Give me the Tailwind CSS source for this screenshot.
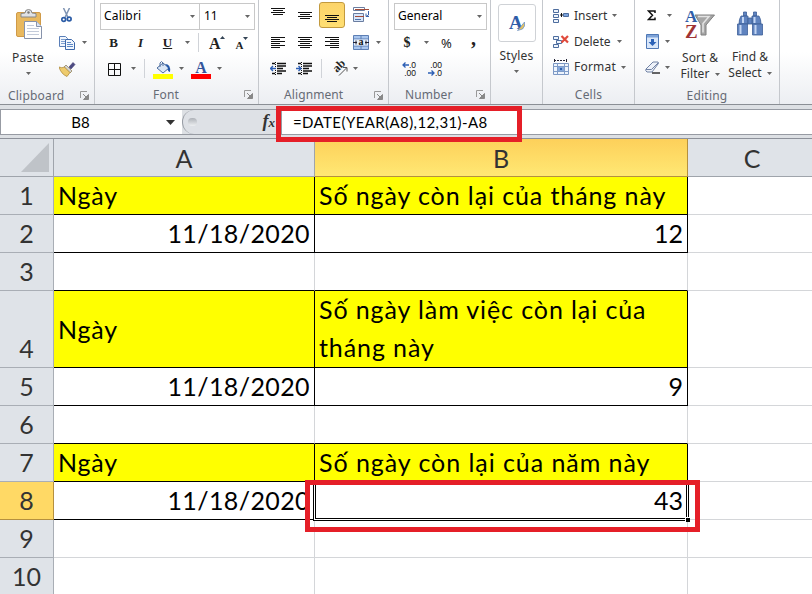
<!DOCTYPE html>
<html lang="vi">
<head>
    <meta charset="UTF-8">
    <meta name="viewport" content="width=device-width, initial-scale=1.0">
    <title>Excel</title>
    <script src="https://cdn.jsdelivr.net/npm/@tailwindcss/browser@4"></script>
</head>
<body class="w-[812px] h-[594px] overflow-hidden bg-white relative font-['Noto_Sans',sans-serif] text-[12px] text-[#333]">

    <!-- Shared icons -->
    <svg class="hidden">
        <symbol id="arrow" viewBox="0 0 5 3"><path d="M0 0h5L2.5 3z" fill="#666"/></symbol>
        <symbol id="launcher" viewBox="0 0 9 9"><path d="M.5 7V.5H7" fill="none" stroke="#999"/><path d="M3 3l4 4M8.500 3.500v5h-5z" fill="#888" stroke="#888"/></symbol>
    </svg>

    <!-- Ribbon -->
    <div class="flex h-[105px] border-b border-[#8b8f95] bg-linear-to-b from-white from-50% to-[#eceef2]">

        <!-- Clipboard -->
        <div class="w-[95px] border-r border-[#c5c8cd] flex flex-col shrink-0">
            <div class="flex h-[84px]">
                <div class="w-[56px] pt-[9px] flex flex-col items-center">
                    <svg class="w-[27px] h-[31px] ml-[2px]" viewBox="0 0 27 31">
                        <rect x=".5" y="3.500" width="24" height="24" rx="1.500" fill="#e9b95f" stroke="#d09a48"/>
                        <path d="M5 8V4.500L9 4q0-3.500 3.500-3.500T16 4l4 .5V8z" fill="#e0e2e5" stroke="#888"/>
                        <circle cx="12.500" cy="3.500" r="1.200" fill="#777"/>
                        <path d="M8.500 12.500h12l5 5v12h-17z" fill="#fff" stroke="#8793ab"/>
                        <path d="M20.500 12.500v5h5" fill="#dbe4f3" stroke="#8793ab"/>
                        <path d="M11 16.500h7M11 19.500h12M11 22.500h12M11 25.500h12" stroke="#c3cbda"/>
                    </svg>
                    <span class="leading-[16px] mt-[10px] tracking-[.2px]">Paste</span>
                    <svg class="w-[5px] h-[3px] mt-[6px]"><use href="#arrow"/></svg>
                </div>
                <div class="pt-[2px]">
                    <div class="h-[27px] flex items-center pl-[5px]">
                        <svg class="w-[11px] h-[15px]" viewBox="0 0 11 15"><path d="M2.500 0l4.500 9.500M8.500 0L4 9.500" stroke="#7e93b2" stroke-width="1.500"/><circle cx="2.700" cy="11.500" r="1.900" fill="none" stroke="#2c5ca6" stroke-width="1.700"/><circle cx="8.200" cy="11" r="1.900" fill="none" stroke="#2c5ca6" stroke-width="1.700"/></svg>
                    </div>
                    <div class="h-[27px] flex items-center pl-[3px]">
                        <svg class="w-[16px] h-[14px]" viewBox="0 0 16 14"><path d="M.5.5h6l2 2v8h-8z" fill="#f1f6fd" stroke="#5a7fb8"/><path d="M2 3.500h4M2 5.500h4M2 7.500h4" stroke="#7d9fd0"/><path d="M6.500 3.500h6l3 3v7h-9z" fill="#f1f6fd" stroke="#3d68aa"/><path d="M8 6.500h4M8 8.500h6M8 10.500h6" stroke="#5c88c6"/></svg>
                        <svg class="w-[5px] h-[3px] ml-[7px]"><use href="#arrow"/></svg>
                    </div>
                    <div class="h-[27px] flex items-center pl-[3px]">
                        <svg class="w-[17px] h-[15px]" viewBox="0 0 17 15"><path d="M10 5l4-4.500 2 2L12 7z" fill="#4c4a82" stroke="#3c3a70" stroke-width=".6"/><path d="M7 3l6 6-2 2-6-6z" fill="#d4d4d4" stroke="#8a7a50" stroke-width=".7"/><path d="M0 5q3 1.500 5.500 0L11 10.500 8 14.500Q2 12 0 5z" fill="#eecb6d" stroke="#a7812c" stroke-width=".7"/></svg>
                    </div>
                </div>
            </div>
            <div class="flex items-center h-[20px] pt-[3px] pl-[8px] text-[#666b75]">
                <span class="w-[72px] tracking-[.2px]">Clipboard</span>
                <svg class="w-[9px] h-[9px]"><use href="#launcher"/></svg>
            </div>
        </div>

        <!-- Font -->
        <div class="w-[164px] border-r border-[#c5c8cd] flex flex-col shrink-0 pt-[2px]">
            <div class="h-[28px] flex pl-[5px] pt-px">
                <div class="w-[100px] border border-[#c8c8c8] bg-white flex items-center justify-between pl-[3px] pr-[4px] text-black">
                    <span class="-mt-[1px] tracking-[.2px]">Calibri</span><svg class="w-[5px] h-[3px]"><use href="#arrow"/></svg>
                </div>
                <div class="w-[55px] border border-l-0 border-[#c8c8c8] bg-white flex items-center justify-between pl-[4px] pr-[4px] text-black">
                    <span class="-mt-[1px]">11</span><svg class="w-[5px] h-[3px]"><use href="#arrow"/></svg>
                </div>
            </div>
            <div class="h-[26px] flex items-center font-['Liberation_Serif',serif] font-bold text-[13px] text-[#222]">
                <span class="w-[27px] ml-[5px] text-center">B</span>
                <span class="w-[27px] text-center italic">I</span>
                <span class="w-[27px] text-center underline">U</span>
                <svg class="w-[5px] h-[3px] ml-[4px]"><use href="#arrow"/></svg>
                <span class="w-px h-[19px] bg-[#d0d3d8] ml-[8px]"></span>
                <span class="ml-[10px] text-[16px] leading-[17px] mt-[2px]">A</span>
                <svg class="w-[5px] h-[3px] -ml-[1px] mb-[9px]" viewBox="0 0 5 3"><path d="M0 3h5L2.500 0z" fill="#345"/></svg>
                <span class="ml-[11px] text-[11px] mt-[5px]">A</span>
                <svg class="w-[5px] h-[3px] -ml-[1px] mb-[8px]" viewBox="0 0 5 3"><path d="M0 0h5L2.500 3z" fill="#345"/></svg>
            </div>
            <div class="h-[27px] flex items-center">
                <svg class="w-[13px] h-[13px] ml-[13px] mt-[2px]" viewBox="0 0 13 13"><path d="M.5.5h12v12H.5zM6.500.5v12M.5 6.500h12" fill="none" stroke="#111"/></svg>
                <svg class="w-[5px] h-[3px] ml-[10px]"><use href="#arrow"/></svg>
                <span class="w-px h-[19px] bg-[#d0d3d8] ml-[8px]"></span>
                <svg class="w-[20px] h-[18px] ml-[8px] mt-[2px]" viewBox="0 0 20 18"><path d="M4 7l6-5 6 5-6 5z" fill="#dbe7f6" stroke="#4e6e9f"/><path d="M7 6V2q1.500-3 3 0v3" fill="none" stroke="#4e6e9f"/><path d="M12 3q6 0 5 8-3-1-2-4z" fill="#2458a8"/><path d="M0 13h20v5H0z" fill="#ff0"/></svg>
                <svg class="w-[5px] h-[3px] ml-[6px]"><use href="#arrow"/></svg>
                <div class="ml-[7px] w-[20px] mt-[2px] h-[18px] flex flex-col items-center border-b-[5px] border-[#f00] font-['Liberation_Serif',serif] font-bold text-[16px] leading-[13px] text-[#34549b]">A</div>
                <svg class="w-[5px] h-[3px] ml-[6px]"><use href="#arrow"/></svg>
            </div>
            <div class="flex items-center h-[21px] pt-[3px] mt-px pl-[58px] text-[#666b75]">
                <span class="w-[91px] tracking-[.2px]">Font</span>
                <svg class="w-[9px] h-[9px]"><use href="#launcher"/></svg>
            </div>
        </div>

        <!-- Alignment -->
        <div class="w-[130px] border-r border-[#c5c8cd] flex flex-col shrink-0 pt-[2px]">
            <div class="h-[27px] flex items-center">
                <svg class="w-[14px] h-[7px] ml-[12px] mb-[7px]" viewBox="0 0 14 7"><path d="M0 .5h14M2 2.500h10M0 4.500h14M2 6.500h10" stroke="#111"/></svg>
                <svg class="w-[14px] h-[7px] ml-[13px]" viewBox="0 0 14 7"><path d="M0 .5h14M2 2.500h10M0 4.500h14M2 6.500h10" stroke="#111"/></svg>
                <div class="w-[26px] h-[26px] ml-[7px] rounded-[3px] border border-[#c29a3e] bg-linear-to-b from-[#fcd46a] to-[#ffdf72] flex justify-center pt-[12px]">
                    <svg class="w-[14px] h-[7px]" viewBox="0 0 14 7"><path d="M0 .5h14M2 2.500h10M0 4.500h14M2 6.500h10" stroke="#111"/></svg>
                </div>
                <svg class="w-[17px] h-[16px] ml-[8px]" viewBox="0 0 17 16"><path d="M.5.500h11v3H.5z" fill="#fff" stroke="#6a7da0"/><path d="M2 2.500h14" stroke="#a34b39"/><path d="M.5 6.500h10v8H.5z" fill="#d7e6fa" stroke="#6a7da0"/><path d="M2 9.500h9" stroke="#a34b39"/><path d="M2 12.500h6" stroke="#4e70a8"/><path d="M15.500 4v4L13 9.500M13 6.500v3h3" fill="none" stroke="#3a64ac"/></svg>
            </div>
            <div class="h-[27px] flex items-center">
                <svg class="w-[14px] h-[11px] ml-[12px]" viewBox="0 0 14 11"><path d="M0 .5h14M0 2.500h9M0 4.500h14M0 6.500h9M0 8.500h14M0 10.500h9" stroke="#111"/></svg>
                <svg class="w-[14px] h-[11px] ml-[13px]" viewBox="0 0 14 11"><path d="M0 .5h14M2 2.500h10M0 4.500h14M2 6.500h10M0 8.500h14M2 10.500h10" stroke="#111"/></svg>
                <svg class="w-[14px] h-[11px] ml-[13px]" viewBox="0 0 14 11"><path d="M0 .5h14M5 2.500h9M0 4.500h14M5 6.500h9M0 8.500h14M5 10.500h9" stroke="#111"/></svg>
                <svg class="w-[16px] h-[15px] ml-[14px]" viewBox="0 0 16 15"><path d="M.5.500h15v14H.5z" fill="#a9c6ee" stroke="#5d7fb4"/><path d="M8 0v15M0 4h16M0 11h16" stroke="#5d7fb4"/><path d="M1 4.500h14v6H1z" fill="#e8f0fb"/><path d="M0 7.500h4M12 7.500h4M3 5.500v4M13 5.500v4" stroke="#223"/><text x="8" y="10" text-anchor="middle" font-family="Liberation Serif" font-weight="bold" font-size="10" fill="#111">a</text></svg>
                <svg class="w-[5px] h-[3px] ml-[7px]"><use href="#arrow"/></svg>
            </div>
            <div class="h-[27px] flex items-center">
                <svg class="w-[16px] h-[13px] ml-[11px]" viewBox="0 0 16 13"><path d="M2 1.500h3M7 1.500h9M7 4h9M7 6.500h6M7 9h9M2 11.500h3M7 11.500h5" stroke="#111" stroke-width="1.300"/><path d="M5.500 0v13" stroke="#111" stroke-dasharray="1 1"/><path d="M6 6.500H1M3 4L.5 6.500 3 9" fill="none" stroke="#2d5fb5" stroke-width="1.400"/></svg>
                <svg class="w-[16px] h-[13px] ml-[10px]" viewBox="0 0 16 13"><path d="M2 1.500h3M7 1.500h9M7 4h9M7 6.500h6M7 9h9M2 11.500h3M7 11.500h5" stroke="#111" stroke-width="1.300"/><path d="M5.500 0v13" stroke="#111" stroke-dasharray="1 1"/><path d="M0 6.500h5M2.500 4L5 6.500 2.500 9" fill="none" stroke="#2d5fb5" stroke-width="1.400"/></svg>
                <span class="w-px h-[19px] bg-[#d0d3d8] ml-[9px]"></span>
                <svg class="w-[17px] h-[16px] ml-[10px] overflow-visible" viewBox="0 0 17 16"><text transform="translate(5 12) rotate(-45)" font-family="Liberation Serif" font-weight="bold" font-size="12" fill="#222">ab</text><path d="M7 14.500L14.500 7M11 6.500h4v4" fill="none" stroke="#555"/></svg>
                <svg class="w-[5px] h-[3px] ml-[4px]"><use href="#arrow"/></svg>
            </div>
            <div class="flex items-center h-[21px] pt-[3px] mt-px pl-[25px] text-[#666b75]">
                <span class="w-[90px] tracking-[.1px]">Alignment</span>
                <svg class="w-[9px] h-[9px]"><use href="#launcher"/></svg>
            </div>
        </div>

        <!-- Number -->
        <div class="w-[102px] border-r border-[#c5c8cd] flex flex-col shrink-0 pt-[2px]">
            <div class="h-[28px] flex pl-[5px] pt-px">
                <div class="w-[93px] border border-[#c8c8c8] bg-white flex items-center justify-between pl-[3px] pr-[4px] text-black">
                    <span class="-mt-[1px]">General</span><svg class="w-[5px] h-[3px]"><use href="#arrow"/></svg>
                </div>
            </div>
            <div class="h-[26px] flex items-center text-[#222]">
                <span class="w-[14px] ml-[11px] text-center font-['Liberation_Serif',serif] font-bold text-[14px]">$</span>
                <svg class="w-[5px] h-[3px] ml-[10px]"><use href="#arrow"/></svg>
                <span class="ml-[12px] w-[12px] text-[13px] mt-[2px]">%</span>
                <span class="ml-[18px] font-['Liberation_Serif',serif] font-bold text-[20px] -mt-[9px]">,</span>
            </div>
            <div class="h-[27px] flex items-center gap-[10px] pl-[11px] font-['Liberation_Sans',sans-serif] text-[8.5px] leading-[8px] text-[#111]">
                <div class="w-[16px] flex flex-col items-end">
                    <span class="flex items-center"><svg class="w-[7px] h-[6px]" viewBox="0 0 7 6"><path d="M7 3H1M3.500.5L1 3l2.500 2.500" fill="none" stroke="#2d5fb5" stroke-width="1.300"/></svg>.0</span>
                    <span>.00</span>
                </div>
                <div class="w-[16px] flex flex-col items-end">
                    <span>.00</span>
                    <span class="flex items-center"><svg class="w-[7px] h-[6px]" viewBox="0 0 7 6"><path d="M0 3h6M3.500.5L6 3 3.500 5.500" fill="none" stroke="#2d5fb5" stroke-width="1.300"/></svg>.0</span>
                </div>
            </div>
            <div class="flex items-center h-[21px] pt-[3px] mt-px pl-[16px] text-[#666b75]">
                <span class="w-[71px] tracking-[.1px]">Number</span>
                <svg class="w-[9px] h-[9px]"><use href="#launcher"/></svg>
            </div>
        </div>

        <!-- Styles -->
        <div class="w-[52px] border-r border-[#c5c8cd] flex flex-col items-center shrink-0 pt-[4px]">
            <div class="w-[38px] h-[38px] border border-[#cfd2d6] rounded-[3px] bg-white flex items-center justify-center">
                <svg class="w-[17px] h-[18px] overflow-visible" viewBox="0 0 17 18"><text x="1" y="15" font-family="Liberation Serif" font-weight="bold" font-size="19" fill="#2f5da8">A</text><path d="M16.500 8l-4 5-3 3.500 5-1.500 2-3z" fill="#e7c35e" stroke="#6e95cc" stroke-width=".8"/></svg>
            </div>
            <span class="leading-[16px] mt-[6px] tracking-[.2px]">Styles</span>
            <svg class="w-[5px] h-[3px] mt-[6px]"><use href="#arrow"/></svg>
        </div>

        <!-- Cells -->
        <div class="w-[92px] border-r border-[#c5c8cd] flex flex-col shrink-0 pt-[3px]">
            <div class="h-[26px] flex items-center pl-[10px]">
                <svg class="w-[16px] h-[14px]" viewBox="0 0 16 14"><path d="M.5.500h5v3h-5zM.5 5.500h5v3h-5zM.5 10.500h5v3h-5z" fill="#eef4fc" stroke="#4d6d9e"/><path d="M10.500 4.500h5v3h-5z" fill="#7ba3dd" stroke="#4d6d9e"/><path d="M7 6h3M8.500 4v4" stroke="#111"/></svg>
                <span class="ml-[5px]">Insert</span><svg class="w-[5px] h-[3px] ml-[5px]"><use href="#arrow"/></svg>
            </div>
            <div class="h-[26px] flex items-center pl-[10px]">
                <svg class="w-[16px] h-[14px]" viewBox="0 0 16 14"><path d="M.5 1.500h5v3h-5zM3.500 5.500h5v3h-5zM.5 9.500h5v3h-5z" fill="#eef4fc" stroke="#4d6d9e"/><path d="M8.500 1l6.500 6.500M15 1L8.500 7.500" stroke="#e04a3c" stroke-width="2.200"/></svg>
                <span class="ml-[5px]">Delete</span><svg class="w-[5px] h-[3px] ml-[6px]"><use href="#arrow"/></svg>
            </div>
            <div class="h-[26px] flex items-center pl-[10px]">
                <svg class="w-[16px] h-[16px]" viewBox="0 0 16 16"><path d="M1 1.500h13" stroke="#223" stroke-dasharray="2 1"/><path d="M1.500 0v3M13.500 0v3" stroke="#223"/><path d="M.5 4.500h15v11H.5z" fill="#eef4fc" stroke="#7d98c4"/><path d="M4.500 4v12M11.500 4v12M0 7.500h16M0 12.500h16" stroke="#7f9cc8"/><path d="M5 8h6v4H5z" fill="#86a8dc"/><path d="M7 9h2v2H7z" fill="#2f62ad"/></svg>
                <span class="ml-[5px] tracking-[.2px]">Format</span><svg class="w-[5px] h-[3px] ml-[5px]"><use href="#arrow"/></svg>
            </div>
            <div class="flex items-center justify-center h-[21px] pt-[3px] mt-[3px] text-[#666b75] tracking-[.2px]">Cells</div>
        </div>

        <!-- Editing -->
        <div class="w-[145px] border-r border-[#c5c8cd] flex flex-col shrink-0">
            <div class="flex h-[84px]">
                <div class="pt-[2px] w-[43px]">
                    <div class="h-[26px] flex items-center pl-[12px]">
                        <svg class="w-[9px] h-[11px]" viewBox="0 0 9 11"><path d="M8 3V1H1.500L5.500 5.300 1.500 9.500H8V7.500" fill="none" stroke="#111" stroke-width="1.500"/></svg>
                        <svg class="w-[5px] h-[3px] ml-[11px]"><use href="#arrow"/></svg>
                    </div>
                    <div class="h-[26px] flex items-center pl-[11px]">
                        <svg class="w-[13px] h-[15px]" viewBox="0 0 13 15"><path d="M.5.500h12v14H.5z" fill="#d9e7fa" stroke="#4f78b6"/><path d="M1 1h11v2.500H1z" fill="#7ea3d8"/><path d="M5 5h3v3h2.500l-4 4-4-4H5z" fill="#2b62b8"/></svg>
                        <svg class="w-[5px] h-[3px] ml-[6px]"><use href="#arrow"/></svg>
                    </div>
                    <div class="h-[26px] flex items-center pl-[10px]">
                        <svg class="w-[15px] h-[13px]" viewBox="0 0 15 13"><path d="M1 8l7-7h5q1 1 0 2l-6 8H2q-2-1-1-3z" fill="#eef2f9" stroke="#7182a4"/><path d="M1 8.500h5.500L13 2" fill="none" stroke="#7182a4"/><path d="M7 12h8" stroke="#333" stroke-width="1.500"/></svg>
                        <svg class="w-[5px] h-[3px] ml-[5px]"><use href="#arrow"/></svg>
                    </div>
                </div>
                <div class="w-[46px] pt-[9px] flex flex-col items-center leading-[16px] -ml-px">
                    <svg class="w-[30px] h-[30px] overflow-visible" viewBox="0 0 30 30"><path d="M10 6h19.500L21 16v10h-5V16z" fill="#a6a6a6" stroke="#808080"/><path d="M13 7.500h11l-6 7v9" fill="none" stroke="#e3e3e3" stroke-width="1.500"/><text x="0" y="13" font-family="Liberation Serif" font-weight="bold" font-size="17" fill="#2f5da8">A</text><text x="0" y="29" font-family="Liberation Serif" font-weight="bold" font-size="19" fill="#a03434">Z</text></svg>
                    <span class="mt-[11px] whitespace-nowrap tracking-[.2px]">Sort &amp;</span>
                    <span class="flex items-center tracking-[.1px]">Filter<svg class="w-[5px] h-[3px] ml-[5px]"><use href="#arrow"/></svg></span>
                </div>
                <div class="w-[54px] pt-[11px] flex flex-col items-center leading-[16px]">
                    <svg class="w-[28px] h-[26px]" viewBox="0 0 28 26"><g fill="#5f83bf" stroke="#3e5f98" stroke-width=".8"><path d="M7.500 1h3v4h-3zM17.500 1h3v4h-3z"/><path d="M5 5h7v8H3q0-5 2-8zM16 5h7q2 3 2 8h-9z"/><path d="M12 7h4v6h-4z"/><path d="M1.500 13h10v11h-10zM16.500 13h10v11h-10z"/></g><path d="M4.500 14v9M7 6v6M19.500 14v9M18.500 6v6" stroke="#c3d6f3" stroke-width="2"/></svg>
                    <span class="mt-[12px] whitespace-nowrap">Find &amp;</span>
                    <span class="flex items-center">Select<svg class="w-[5px] h-[3px] ml-[5px]"><use href="#arrow"/></svg></span>
                </div>
            </div>
            <div class="flex items-center justify-center h-[20px] pt-[3px] text-[#666b75] tracking-[.2px]">Editing</div>
        </div>
    </div>

    <!-- Formula bar -->
    <div class="h-[34px] pt-[4px] pb-[3px] bg-[#dde0e4] border-b border-[#8d919a]">
        <div class="h-[26px] flex border-y border-[#979ba3] font-[Lato,sans-serif] text-[15px] text-black">
            <div class="w-[182px] bg-white border-l border-[#979ba3] flex items-center">
                <span class="w-[159px] text-center">B8</span>
                <svg class="w-[9px] h-[5px] ml-[6px]" viewBox="0 0 9 5"><path d="M0 0h9L4.500 5z" fill="#333"/></svg>
            </div>
            <div class="w-[99px] bg-[#dee1e6] border-l border-[#979ba3] rounded-l-full flex items-center justify-between pl-[5px] pr-[6px]">
                <span class="w-[9px] h-[8px] rounded-full bg-linear-to-b from-[#aeb2b8] to-[#eef0f2]"></span>
                <span class="-mt-px font-['Liberation_Serif',serif] italic font-bold text-[18px] text-[#333]">f<span class="text-[13px]">x</span></span>
            </div>
            <div class="grow bg-white border-l border-[#979ba3] flex items-center pl-[11px]">
                <span class="tracking-[.4px]">=DATE(YEAR(A8),12,31)-A8</span>
            </div>
        </div>
    </div>

    <!-- Sheet -->
    <div class="grid grid-cols-[54px_261px_373px_129px] grid-rows-[38px_38px_38px_38px_77px_38px_38px_38px_38px_38px_38px] w-[817px] font-[Lato,sans-serif] text-[25px] leading-[36px] text-black *:border-r *:border-b">
        <div class="bg-[#dfe3e8] border-[#9fa4ab] flex items-end justify-end p-[4px]">
            <svg class="w-[28px] h-[29px]" viewBox="0 0 28 29"><path d="M28 0v29H0z" fill="#bfc3c8"/></svg>
        </div>
        <div class="bg-[#dfe3e8] border-[#9fa4ab] text-center text-[#333] pt-[1px]">A</div>
        <div class="bg-linear-to-b from-[#fdd05a] to-[#ffe873] border-[#b5903f] text-center text-[#333] pt-[1px]">B</div>
        <div class="bg-[#dfe3e8] border-[#9fa4ab] text-center text-[#333] pt-[1px]">C</div>

        <div class="bg-[#dfe3e8] border-[#a9aeb5] text-center text-[#333]">1</div>
        <div class="bg-[#ff0] border-black pl-[4px] tracking-[.8px]">Ngày</div>
        <div class="bg-[#ff0] border-black pl-[4px] tracking-[.9px]">Số ngày còn lại của tháng này</div>
        <div class="border-[#d4d6d9]"></div>

        <div class="bg-[#dfe3e8] border-[#a9aeb5] text-center text-[#333]">2</div>
        <div class="border-black text-right pr-[4px] tracking-[.4px]">11/18/2020</div>
        <div class="border-black text-right pr-[4px]">12</div>
        <div class="border-[#d4d6d9]"></div>

        <div class="bg-[#dfe3e8] border-[#a9aeb5] text-center text-[#333]">3</div>
        <div class="border-r-[#d4d6d9] border-b-black"></div>
        <div class="border-r-[#d4d6d9] border-b-black"></div>
        <div class="border-[#d4d6d9]"></div>

        <div class="bg-[#dfe3e8] border-[#a9aeb5] text-center text-[#333] pt-[39px]">4</div>
        <div class="bg-[#ff0] border-black pl-[4px] tracking-[.8px] flex items-center">Ngày</div>
        <div class="bg-[#ff0] border-black pl-[4px] tracking-[.9px] leading-[38px]"><div class="-mt-px">Số ngày làm việc còn lại của<br>tháng này</div></div>
        <div class="border-[#d4d6d9]"></div>

        <div class="bg-[#dfe3e8] border-[#a9aeb5] text-center text-[#333]">5</div>
        <div class="border-black text-right pr-[4px] tracking-[.4px]">11/18/2020</div>
        <div class="border-black text-right pr-[4px]">9</div>
        <div class="border-[#d4d6d9]"></div>

        <div class="bg-[#dfe3e8] border-[#a9aeb5] text-center text-[#333]">6</div>
        <div class="border-r-[#d4d6d9] border-b-black"></div>
        <div class="border-r-[#d4d6d9] border-b-black"></div>
        <div class="border-[#d4d6d9]"></div>

        <div class="bg-[#dfe3e8] border-[#a9aeb5] text-center text-[#333]">7</div>
        <div class="bg-[#ff0] border-black pl-[4px] tracking-[.8px]">Ngày</div>
        <div class="bg-[#ff0] border-black pl-[4px] tracking-[.95px]">Số ngày còn lại của năm này</div>
        <div class="border-[#d4d6d9]"></div>

        <div class="bg-[#ffd965] border-[#b5903f] text-center text-[#333]">8</div>
        <div class="border-black text-right pr-[4px] tracking-[.4px]">11/18/2020</div>
        <div class="border-black text-right pr-[4px]">43</div>
        <div class="border-[#d4d6d9]"></div>

        <div class="bg-[#dfe3e8] border-[#a9aeb5] text-center text-[#333]">9</div>
        <div class="border-[#d4d6d9]"></div>
        <div class="border-[#d4d6d9]"></div>
        <div class="border-[#d4d6d9]"></div>

        <div class="bg-[#dfe3e8] border-[#a9aeb5] text-center text-[#333]">10</div>
        <div class="border-[#d4d6d9]"></div>
        <div class="border-[#d4d6d9]"></div>
        <div class="border-[#d4d6d9]"></div>
    </div>

    <!-- Active cell outline and fill handle -->
    <div class="absolute left-[313px] top-[480px] w-[376px] h-[41px] border border-black">
        <div class="w-full h-full border border-white"></div>
        <div class="absolute inset-px border border-black"></div>
        <div class="absolute -right-[2px] -bottom-[2px] w-[5px] h-[5px] bg-black border-t border-l border-white"></div>
    </div>

    <!-- Red highlights -->
    <div class="absolute left-[276px] top-[106px] w-[246px] h-[36px] border-[5px] border-[#e51f28]"></div>
    <div class="absolute left-[305px] top-[480px] w-[395px] h-[52px] border-[5px] border-[#e51f28]"></div>

</body>
</html>
